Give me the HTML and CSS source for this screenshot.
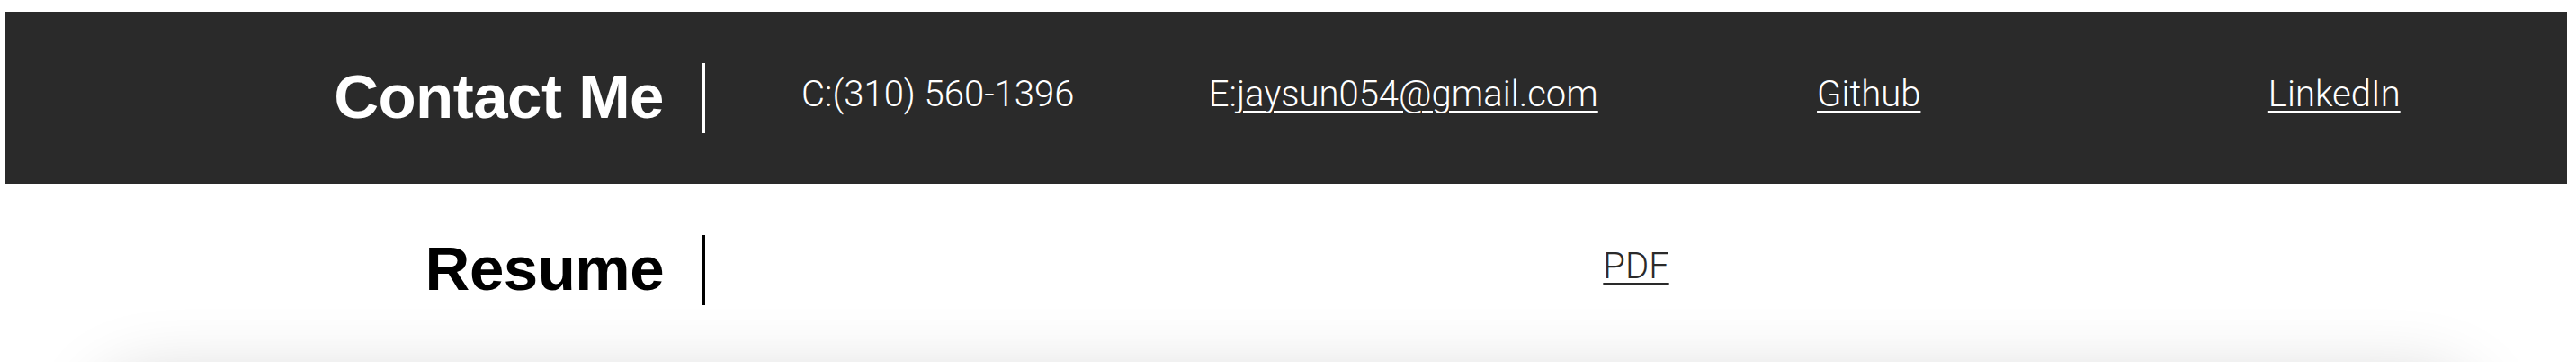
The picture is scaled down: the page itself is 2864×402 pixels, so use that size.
FILE: index.html
```html
<!DOCTYPE html>
<html lang="en">
<head>
<meta charset="utf-8">
<title>Contact Me</title>
<link rel="stylesheet" href="styles.css">
</head>
<body>
<div class="page">
  <section class="row row-dark">
    <div class="title-col"><h2 class="title">Contact Me</h2></div>
    <div class="divider divider-light"></div>
    <div class="items">
      <div class="item">C:(310) 560-1396</div>
      <div class="item">E:<a href="#">jaysun054@gmail.com</a></div>
      <div class="item"><a href="#">Github</a></div>
      <div class="item"><a href="#">LinkedIn</a></div>
    </div>
  </section>
  <section class="row row-light">
    <div class="title-col"><h2 class="title">Resume</h2></div>
    <div class="divider divider-dark"></div>
    <div class="items">
      <div class="item"><a href="#">PDF</a></div>
    </div>
  </section>
  <div class="next-card"></div>
</div>
</body>
</html>
```
FILE: styles.css
```css
html, body {
  margin: 0;
  padding: 0;
  background: #ffffff;
  height: 402px;
  overflow: hidden;
}
.page {
  padding: 13px 10px 0 6px;
  font-family: "Liberation Sans", Arial, sans-serif;
}
.row {
  display: flex;
  align-items: center;
  height: 191px;
}
.row-dark {
  background: #2a2a2a;
  color: #ffffff;
}
.row-light {
  background: #ffffff;
  color: #000000;
}
.title-col {
  width: 774px;
  box-sizing: border-box;
  padding-right: 42px;
  text-align: right;
}
.title {
  margin: 0;
  font-size: 69px;
  font-weight: 700;
  line-height: 1;
  letter-spacing: -0.5px;
  position: relative;
  top: -1px;
}
.divider {
  width: 4px;
  height: 78px;
  flex: none;
}
.divider-light { background: #ffffff; }
.divider-dark { background: #000000; }
.items {
  flex: 1;
  display: flex;
}
.item {
  flex: 1;
  text-align: center;
  font-family: Roboto, "Liberation Sans", sans-serif;
  font-weight: 300;
  font-size: 40px;
  line-height: 1;
  position: relative;
  top: -4px;
}
.row-dark .item a {
  color: #ffffff;
  text-decoration: underline;
  text-decoration-thickness: 2px;
  text-underline-offset: 5px;
}
.row-light .item a {
  color: #2a2a2a;
  text-decoration: underline;
  text-decoration-thickness: 2px;
  text-underline-offset: 5px;
}
.next-card {
  margin: 25px 100px 0 100px;
  height: 120px;
  border-radius: 60px;
  background: #ffffff;
  box-shadow: 0 0 80px rgba(0, 0, 0, 0.18);
}
```
